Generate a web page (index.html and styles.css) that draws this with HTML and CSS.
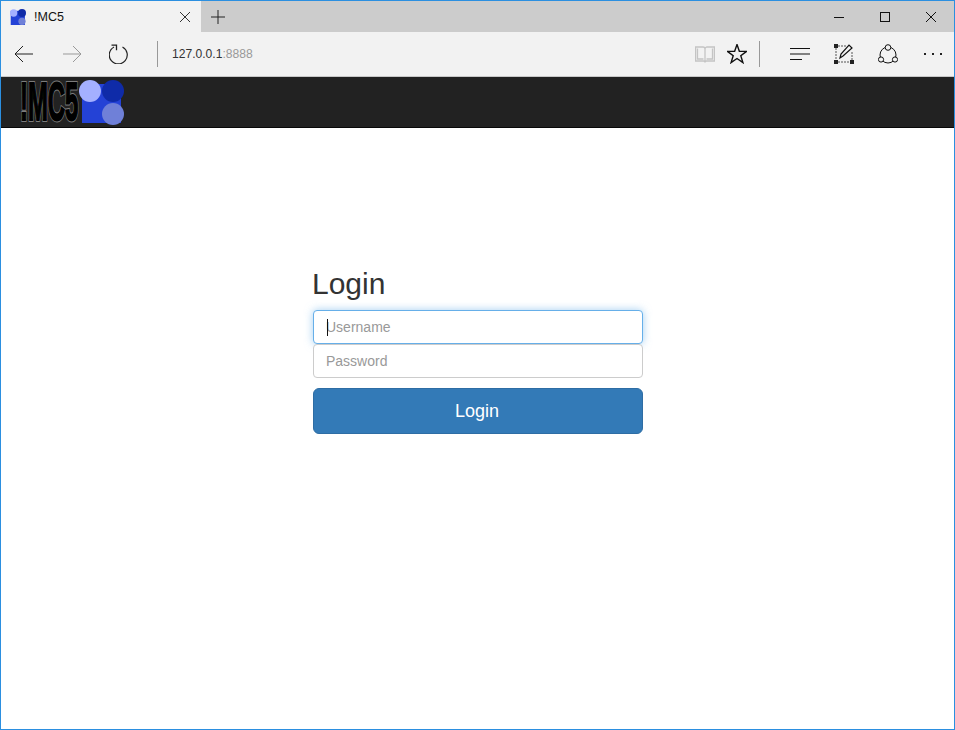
FILE: index.html
```html
<!DOCTYPE html>
<html lang="en">

<head>
    <meta charset="UTF-8">
    <title>!MC5</title>
    <link rel="stylesheet" href="styles.css">
</head>

<body>
    <div id="janela">
        <div class="abas">
            <div class="aba">
                <svg class="favicon" width="16" height="16" viewBox="0 0 44 44">
                    <rect x="2" y="5" width="39" height="39" fill="#2442d6" />
                    <circle cx="33" cy="11" r="11" fill="#0f2ba8" />
                    <circle cx="33" cy="34" r="10" fill="#6f80d8" />
                    <circle cx="10" cy="11" r="10" fill="#a4b0ff" />
                </svg>
                <span class="aba-titulo">!MC5</span>
                <svg class="aba-fechar" width="12" height="12" viewBox="0 0 12 12">
                    <path d="M1 1l10 10M11 1L1 11" stroke="#333" fill="none" />
                </svg>
            </div>
            <svg class="nova-aba" width="14" height="14" viewBox="0 0 14 14">
                <path d="M7 0v14M0 7h14" stroke="#222" fill="none" />
            </svg>
            <div class="controles">
                <svg width="10" height="10" viewBox="0 0 10 10">
                    <path d="M0 5.500h10" stroke="#111" fill="none" />
                </svg>
                <svg width="10" height="10" viewBox="0 0 10 10">
                    <rect x="0.500" y="0.500" width="9" height="9" stroke="#111" fill="none" />
                </svg>
                <svg width="10" height="10" viewBox="0 0 10 10">
                    <path d="M0 0l10 10M10 0L0 10" stroke="#111" fill="none" />
                </svg>
            </div>
        </div>

        <div class="barra">
            <div class="navegacao">
                <svg width="20" height="18" viewBox="0 0 20 18">
                    <path d="M19 9H1M9 1L1 9l8 8" stroke="#222" fill="none" />
                </svg>
                <svg width="20" height="18" viewBox="0 0 20 18">
                    <path d="M1 9h18M11 1l8 8-8 8" stroke="#999" fill="none" />
                </svg>
                <svg class="icone-recarregar" width="20" height="20" viewBox="0 0 20 20">
                    <path d="M5 3A9 9 0 1 0 13.500 3" stroke="#222" stroke-width="1.200" fill="none" />
                    <path d="M2.500 1.200h5v5" stroke="#222" stroke-width="1.300" fill="none" />
                </svg>
            </div>
            <div class="separador"></div>
            <div class="endereco">127.0.0.1<span>:8888</span></div>
            <div class="ferramentas">
                <svg class="icone-livro" width="20" height="18" viewBox="0 0 20 18">
                    <path d="M.6 2h7.400c1 0 2 1 2 2 0-1 1-2 2-2h7.400v14h-8l-1.400 1-1.400-1h-8zM10 4v13M2.500 3.500v10.500h6M17.500 3.500v10.500h-6" stroke="#c4c4c4" stroke-width="1.300" fill="none" />
                </svg>
                <svg class="icone-estrela" width="20" height="20" viewBox="0 0 20 20">
                    <path d="M10 .5l2.350 6.800 7.150.1-5.700 4.300 2.100 6.900L10 14.500l-5.900 4.100 2.100-6.900L.5 7.400l7.150-.1z" stroke="#111" stroke-width="1.400" fill="none" />
                </svg>
                <div class="separador"></div>
                <svg class="icone-hub" width="20" height="14" viewBox="0 0 20 14">
                    <path d="M0 1.500h20M0 7h20M0 12.500h12" stroke="#111" fill="none" />
                </svg>
                <svg class="icone-nota" width="20" height="20" viewBox="0 0 20 20">
                    <path d="M12 2H4M2 4v12M4 18h12M18 8v8" stroke="#555" stroke-dasharray="2 1" fill="none" />
                    <path d="M0 0h4v4H0zM0 16h4v4H0zM16 16h4v4h-4z" fill="#222" />
                    <path d="M6 14l1-4 8-9 3 3-9 8z" stroke="#111" stroke-width="1.200" fill="#f2f2f2" />
                </svg>
                <svg class="icone-compartilhar" width="20" height="20" viewBox="0 0 20 20">
                    <circle cx="10" cy="11" r="8" stroke="#111" fill="none" />
                    <circle cx="10" cy="3.500" r="2.800" stroke="#111" fill="#f2f2f2" />
                    <circle cx="3" cy="15.500" r="2.600" stroke="#111" fill="#f2f2f2" />
                    <circle cx="17" cy="15.500" r="2.600" stroke="#111" fill="#f2f2f2" />
                </svg>
                <svg class="icone-mais" width="18" height="4" viewBox="0 0 18 4">
                    <path d="M0 1h2v2H0zM8 1h2v2H8zM16 1h2v2h-2z" fill="#222" />
                </svg>
            </div>
        </div>

        <nav class="navbar">
            <span class="logo-texto" data-texto="!MC5">!MC5</span>
            <svg class="logo-marca" width="46" height="46" viewBox="0 0 46 46">
                <rect x="3" y="5" width="39" height="39" fill="#2442d6" />
                <circle cx="34" cy="12" r="11" fill="#0f2ba8" />
                <circle cx="34" cy="35" r="11" fill="#6f80d8" />
                <circle cx="11" cy="12" r="11" fill="#a4b0ff" />
            </svg>
        </nav>

        <main class="conteudo">
            <form class="login">
                <h2>Login</h2>
                <div class="campo campo-foco"><i class="cursor"></i><span>Username</span></div>
                <div class="campo"><span>Password</span></div>
                <button type="button">Login</button>
            </form>
        </main>
    </div>
</body>

</html>
```

FILE: styles.css
```css
* {
    padding: 0;
    margin: 0;
    box-sizing: border-box;
}

body {
    font-family: "Liberation Sans", Arial, sans-serif;
    background-color: white;
}

#janela {
    width: 955px;
    height: 730px;
    border: 1px solid #2b8fe0;
    display: flex;
    flex-direction: column;
    overflow: hidden;
}

.abas {
    height: 31px;
    background-color: #cccccc;
    display: flex;
    align-items: center;
    flex-shrink: 0;
}

.aba {
    width: 200px;
    height: 31px;
    background-color: #f2f2f2;
    display: flex;
    align-items: center;
    padding-left: 9px;
}

.aba-titulo {
    font-size: 12.500px;
    color: #111;
    margin-left: 8px;
    flex-grow: 1;
}

.aba-fechar {
    margin-right: 10px;
}

.nova-aba {
    margin-left: 10px;
}

.controles {
    margin-left: auto;
    display: flex;
    gap: 36px;
    padding-right: 18px;
}

.barra {
    height: 45px;
    background-color: #f2f2f2;
    border-bottom: 1px solid #c8c8c8;
    display: flex;
    align-items: center;
    flex-shrink: 0;
}

.navegacao {
    display: flex;
    align-items: center;
    gap: 28px;
    padding-left: 13px;
    width: 156px;
}

.icone-recarregar {
    margin-left: -1px;
}

.separador {
    width: 1px;
    height: 26px;
    background-color: #999;
}

.endereco {
    font-size: 12.100px;
    color: #333;
    margin-left: 14px;
}

.endereco span {
    color: #999;
}

.ferramentas {
    margin-left: auto;
    display: flex;
    align-items: center;
    padding-right: 12px;
}

.icone-estrela {
    margin-left: 12px;
}

.ferramentas .separador {
    margin-left: 12px;
}

.icone-hub {
    margin-left: 30px;
}

.icone-nota {
    margin-left: 24px;
}

.icone-compartilhar {
    margin-left: 24px;
}

.icone-mais {
    margin-left: 26px;
}

.navbar {
    height: 51px;
    background-color: #222222;
    border-bottom: 1px solid #080808;
    display: flex;
    align-items: center;
    padding-left: 19px;
    flex-shrink: 0;
}

/* duas camadas de contorno para engrossar a letra */
.logo-texto {
    display: block;
    position: relative;
    width: 59px;
    font-size: 53px;
    line-height: 44px;
    font-weight: bold;
    color: black;
    -webkit-text-stroke: 4px #7c7c7c;
    transform: scaleX(0.45);
    transform-origin: left center;
    white-space: nowrap;
}

.logo-texto::after {
    content: attr(data-texto);
    position: absolute;
    left: 0;
    top: 0;
    -webkit-text-stroke: 2px black;
}

.conteudo {
    flex-grow: 1;
    display: flex;
    justify-content: center;
    padding-top: 139px;
    padding-left: 1px;
}

.login {
    width: 330px;
    display: flex;
    flex-direction: column;
}

h2 {
    font-size: 30px;
    font-weight: normal;
    line-height: 33px;
    color: #333;
    margin-bottom: 10px;
    text-indent: -1px;
}

.campo {
    height: 34px;
    border: 1px solid #ccc;
    border-radius: 4px;
    padding: 0 12px;
    display: flex;
    align-items: center;
    font-size: 14px;
    color: #999;
    background-color: white;
    position: relative;
}

.campo-foco {
    border-color: #66afe9;
    box-shadow: 0 0 8px rgba(102, 175, 233, 0.6);
}

.cursor {
    position: absolute;
    left: 13px;
    top: 8px;
    width: 1px;
    height: 17px;
    background-color: #111;
}

button {
    height: 46px;
    margin-top: 10px;
    padding-right: 2px;
    background-color: #337ab7;
    border: 1px solid #2e6da4;
    border-radius: 6px;
    color: white;
    font-family: inherit;
    font-size: 18px;
}
```
